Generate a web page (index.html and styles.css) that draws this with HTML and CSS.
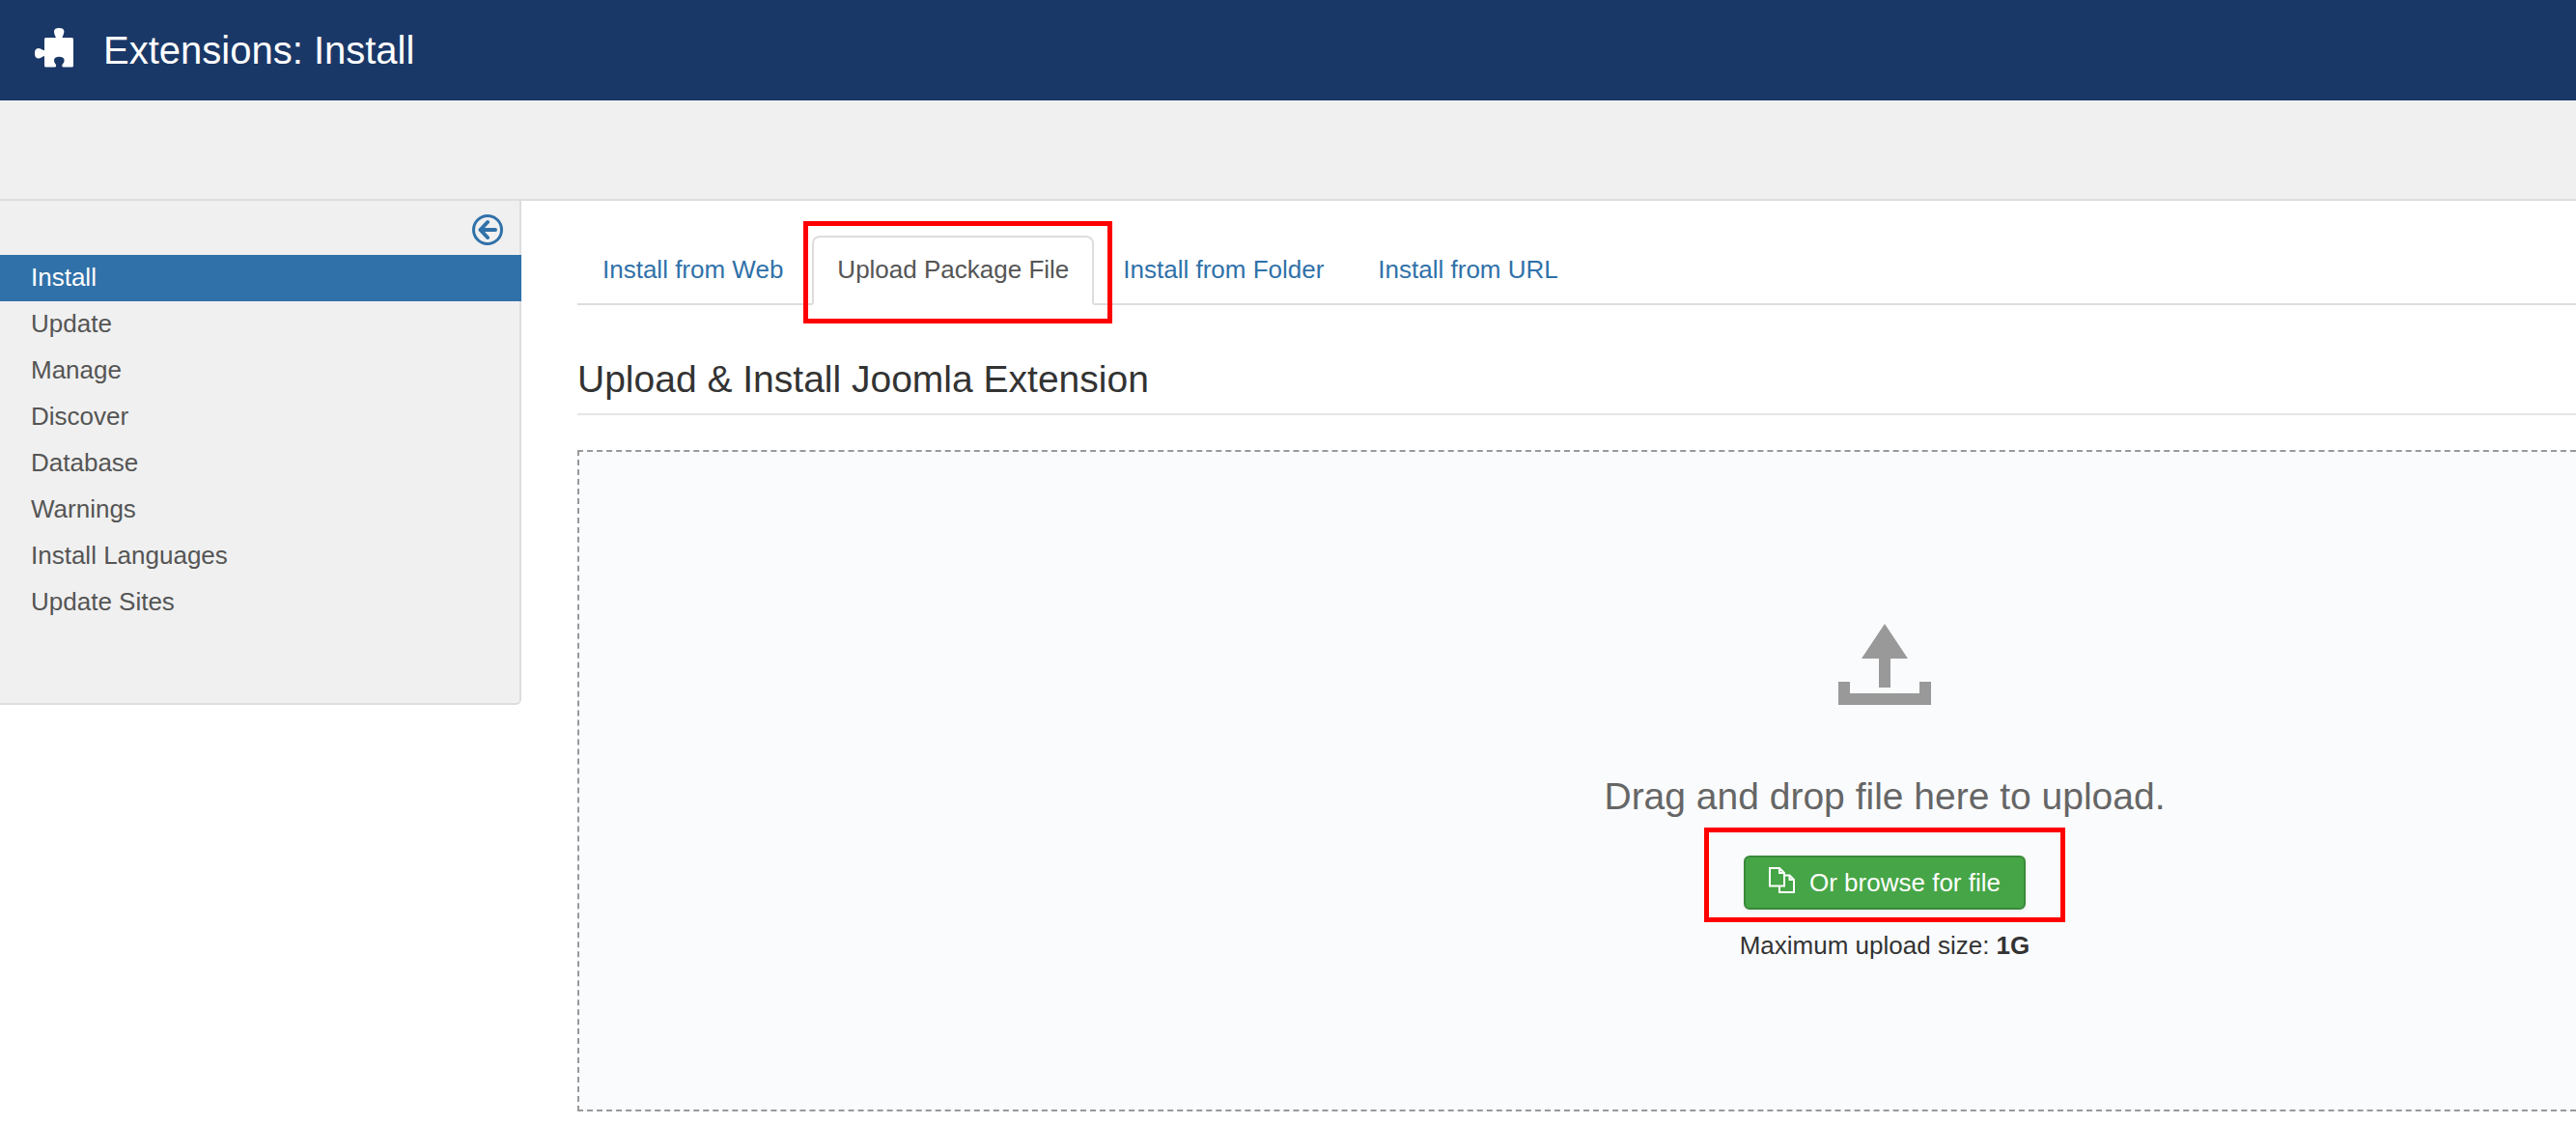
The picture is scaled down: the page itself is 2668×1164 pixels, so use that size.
FILE: index.html
```html
<!DOCTYPE html>
<html lang="en">
<head>
  <meta charset="utf-8">
  <meta name="viewport" content="width=device-width, initial-scale=1">
  <title>Extensions: Install</title>
  <link rel="stylesheet" href="styles.css">
</head>
<body>
  <header class="header">
    <svg class="header-icon" viewBox="0 0 40 41" aria-hidden="true">
      <path d="M22 10C21 8 20 6 20 3.500C20 1 22 0 25.200 0S30.400 1 30.400 3.500C30.400 6 29 8 28.500 10H38.500Q40 10 40 11.500V39Q40 40.500 38.500 40.500H29.500Q28 40.500 28.300 38.500C28.600 37 30.600 36 30.600 33.500C30.600 31 28.500 29.800 25.300 29.800S20 31 20 33.500C20 36 21.800 37 22.100 38.500Q22.400 40.500 21 40.500H11.500Q10 40.500 10 39V29C8 29.500 6 31.500 3.500 31.500C1 31.500 0 29.500 0 26.300S1 21 3.500 21C6 21 8 23 10 23.200V11.500Q10 10 11.500 10Z"/>
    </svg>
    <h1 class="page-title">Extensions: Install</h1>
  </header>
  <div class="toolbar"></div>
  <div class="layout">
    <aside class="sidebar">
      <button class="toggle" type="button" aria-label="Toggle sidebar">
        <svg class="toggle-icon" viewBox="0 0 32 32" aria-hidden="true">
          <circle cx="16" cy="16" r="14.500" stroke-width="3"/>
          <path d="M24 16H8.500M16 8L8.500 16L16 24" stroke-width="4"/>
        </svg>
      </button>
      <nav class="menu" aria-label="Extensions">
        <a class="menu-link active" href="#install">Install</a>
        <a class="menu-link" href="#update">Update</a>
        <a class="menu-link" href="#manage">Manage</a>
        <a class="menu-link" href="#discover">Discover</a>
        <a class="menu-link" href="#database">Database</a>
        <a class="menu-link" href="#warnings">Warnings</a>
        <a class="menu-link" href="#languages">Install Languages</a>
        <a class="menu-link" href="#sites">Update Sites</a>
      </nav>
    </aside>
    <main class="main">
      <nav class="tabs" aria-label="Install method">
        <a class="tab" href="#web">Install from Web</a>
        <a class="tab current" href="#package">Upload Package File<span class="mark mark-tab"></span></a>
        <a class="tab" href="#folder">Install from Folder</a>
        <a class="tab" href="#url">Install from URL</a>
      </nav>
      <h2 class="legend">Upload &amp; Install Joomla Extension</h2>
      <section class="dropzone">
        <svg class="upload-icon" viewBox="0 0 96 84" aria-hidden="true">
          <path d="M48 0L72 36H54V66H42V36H24ZM0 60H12V72H84V60H96V84H0Z"/>
        </svg>
        <p class="lead">Drag and drop file here to upload.</p>
        <div class="browse">
          <button class="browse-button" type="button">
            <svg class="copy-icon" viewBox="0 0 28 28" aria-hidden="true">
              <path d="M1 1H11L16 6V19.500H1ZM11 1V6H16M16 8.500H21.500L26 13V26H11V19.500M21.500 8.500V13H26"/>
            </svg>
            Or browse for file
          </button>
          <span class="mark mark-button"></span>
        </div>
        <p class="limit">Maximum upload size: <strong>1G</strong></p>
      </section>
    </main>
  </div>
</body>
</html>
```
FILE: styles.css
```css
* {
  box-sizing: border-box;
}

body {
  margin: 0;
  background: #fff;
  color: #333;
  font: 26px/36px "Liberation Sans", Arial, sans-serif;
}

h1,
h2,
p {
  margin: 0;
  font-weight: normal;
}

a {
  color: #3071a9;
  text-decoration: none;
}

.header {
  display: flex;
  align-items: center;
  gap: 31px;
  height: 104px;
  padding: 0 36px;
  background: #1a3867;
  color: #fff;
}

.header-icon {
  width: 40px;
  height: 41px;
  margin-bottom: 6px;
  fill: #fff;
}

.page-title {
  font-size: 40px;
  line-height: 56px;
}

.toolbar {
  height: 104px;
  background: #f0f0f0;
  border-bottom: 2px solid #ddd;
}

.layout {
  display: flex;
  align-items: flex-start;
  gap: 58px;
}

.sidebar {
  display: flex;
  flex: none;
  flex-direction: column;
  width: 540px;
  padding-bottom: 80px;
  background: linear-gradient(#ddd, #ddd) right / 2px 100% no-repeat #f0f0f0;
  border-bottom: 2px solid #ddd;
  border-bottom-right-radius: 6px;
}

.toggle {
  align-self: flex-end;
  height: 56px;
  padding: 0 19px;
  border: 0;
  background: none;
}

.toggle-icon {
  display: block;
  width: 32px;
  height: 32px;
  margin-top: 4px;
  fill: none;
  stroke: #3071a9;
  stroke-linecap: round;
  stroke-linejoin: round;
}

.menu {
  display: flex;
  flex-direction: column;
}

.menu-link {
  padding: 5px 32px 7px;
  color: #555;
}

.menu-link.active {
  background: #3071a9;
  color: #fff;
}

.main {
  flex: 1;
  padding: 36px 0 12px;
}

.tabs {
  display: flex;
  gap: 4px;
  border-bottom: 2px solid #ddd;
}

.tab {
  position: relative;
  margin-bottom: -2px;
  padding: 15px 24px 17px;
  border: 2px solid transparent;
  border-radius: 8px 8px 0 0;
}

.tab.current {
  background: #fff;
  border-color: #ddd #ddd #fff;
  color: #555;
}

.mark {
  position: absolute;
  z-index: 1;
  border: 5px solid #f00;
  pointer-events: none;
}

.mark-tab {
  inset: -17px -21px -21px -11px;
}

.mark-button {
  inset: -29px -41px -13px;
}

.legend {
  margin: 36px 0;
  padding-top: 6px;
  border-bottom: 2px solid #e5e5e5;
  font-size: 39px;
  line-height: 70px;
}

/* The drop area stays open on the right, with its prompt set towards that side. */
.dropzone {
  display: flex;
  flex-direction: column;
  align-items: center;
  padding: 178px 0 152px 636px;
  background: #fafbfd;
  border: 2px dashed #999;
  border-right: 0;
}

.upload-icon {
  width: 96px;
  height: 84px;
  fill: #999;
}

.lead {
  margin: 67px 0 33px;
  color: #666;
  font-size: 39px;
  line-height: 56px;
}

.browse {
  position: relative;
}

.browse-button {
  display: flex;
  align-items: center;
  gap: 14px;
  padding: 8px 24px;
  border: 2px solid #3a8a3a;
  border-radius: 6px;
  background: #46a546;
  box-shadow: 0 2px 4px rgba(0, 0, 0, 0.05);
  color: #fff;
  font: inherit;
}

.copy-icon {
  width: 28px;
  height: 28px;
  margin-bottom: 4px;
  fill: none;
  stroke: #fff;
  stroke-width: 2;
}

.limit {
  margin-top: 19px;
}
```
